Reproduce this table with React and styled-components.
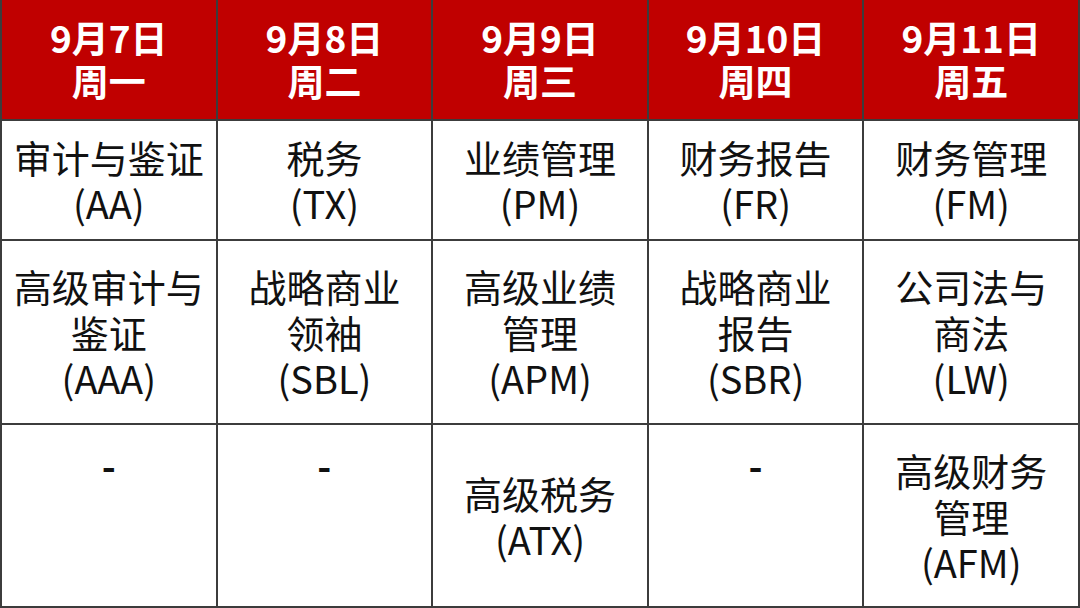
import styled, { createGlobalStyle } from 'styled-components';

const GlobalStyle = createGlobalStyle`
  html, body {
    margin: 0;
    padding: 0;
    background: #ffffff;
  }
  body {
    font-family: "Noto Sans CJK SC", "Noto Sans", sans-serif;
  }
`;

const Table = styled.div`
  width: 1080px;
  height: 608px;
  box-sizing: border-box;
  display: grid;
  grid-template-columns: repeat(5, 1fr);
  grid-template-rows: 119px 118px 182px 181px;
  gap: 2px;
  padding: 0 2px 2px 2px;
  background: #3c3c3c;
`;

const HeadCell = styled.div`
  background: #c00000;
  color: #ffffff;
  font-weight: 700;
  font-size: 37px;
  line-height: 43px;
  display: flex;
  flex-direction: column;
  align-items: center;
  justify-content: center;
  padding-bottom: 2px;
`;

const Cell = styled.div`
  background: #ffffff;
  color: #111111;
  font-size: 38px;
  line-height: 46px;
  display: flex;
  flex-direction: column;
  align-items: center;
  justify-content: ${(p) => (p.$top ? 'flex-start' : 'center')};
  padding-top: ${(p) => (p.$top ? '17px' : '0')};
  text-align: center;
`;

const Dash = styled.span`
  font-weight: 700;
`;

const days = [
  ['9月7日', '周一'],
  ['9月8日', '周二'],
  ['9月9日', '周三'],
  ['9月10日', '周四'],
  ['9月11日', '周五'],
];

const rows = [
  [
    ['审计与鉴证', '(AA)'],
    ['税务', '(TX)'],
    ['业绩管理', '(PM)'],
    ['财务报告', '(FR)'],
    ['财务管理', '(FM)'],
  ],
  [
    ['高级审计与', '鉴证', '(AAA)'],
    ['战略商业', '领袖', '(SBL)'],
    ['高级业绩', '管理', '(APM)'],
    ['战略商业', '报告', '(SBR)'],
    ['公司法与', '商法', '(LW)'],
  ],
  [
    ['-'],
    ['-'],
    ['高级税务', '(ATX)'],
    ['-'],
    ['高级财务', '管理', '(AFM)'],
  ],
];

export default function App() {
  return (
    <>
      <GlobalStyle />
      <Table>
        {days.map((d) => (
          <HeadCell key={d[0]}>
            <span>{d[0]}</span>
            <span>{d[1]}</span>
          </HeadCell>
        ))}
        {rows.map((row, ri) =>
          row.map((lines, ci) => {
            const empty = lines[0] === '-';
            return (
              <Cell key={`${ri}-${ci}`} $top={empty}>
                {empty ? (
                  <Dash>-</Dash>
                ) : (
                  lines.map((l) => <span key={l}>{l}</span>)
                )}
              </Cell>
            );
          })
        )}
      </Table>
    </>
  );
}
